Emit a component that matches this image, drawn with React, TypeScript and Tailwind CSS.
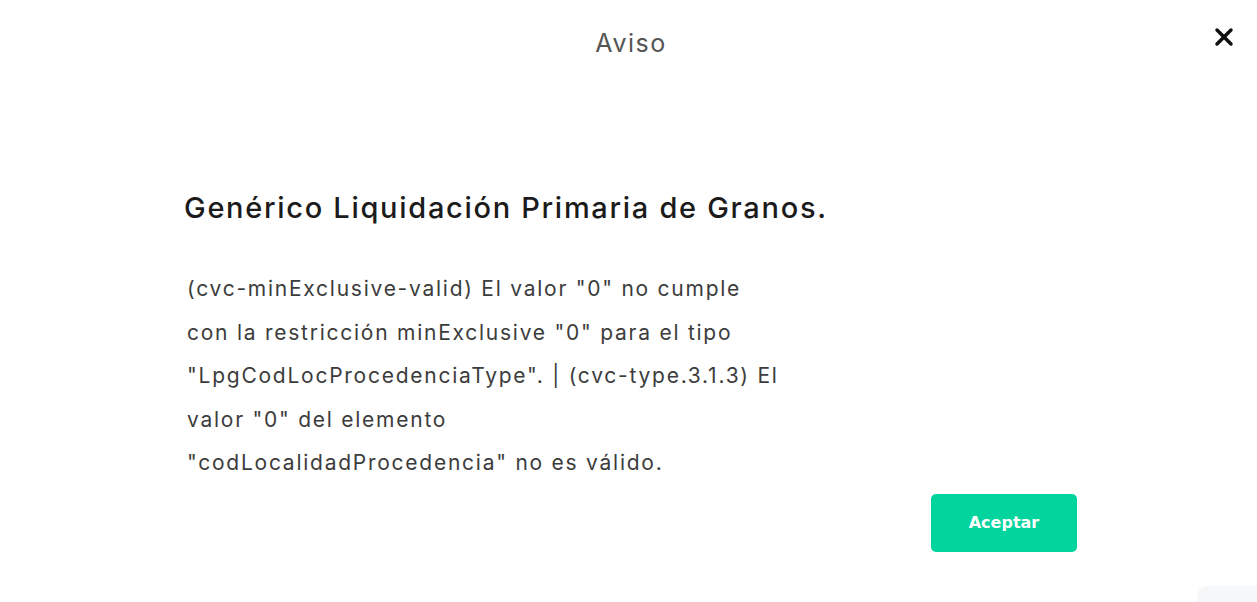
import { X } from "lucide-react"

const lines = [
  '(cvc-minExclusive-valid) El valor "0" no cumple',
  'con la restricción minExclusive "0" para el tipo',
  '"LpgCodLocProcedenciaType". | (cvc-type.3.1.3) El',
  'valor "0" del elemento',
  '"codLocalidadProcedencia" no es válido.',
]

export default function App() {
  return (
    <div className="relative min-h-[602px] bg-white font-['Inter',sans-serif] overflow-hidden">
      <header className="relative flex h-[88px] items-center justify-center pl-[5px]">
        <h1 className="text-[25px] font-normal tracking-[1.5px] text-[#555]">Aviso</h1>
        <button className="absolute right-[15px] top-[19px] p-1 text-[#111]">
          <X className="h-[28px] w-[28px]" strokeWidth={3} />
        </button>
      </header>

      <main className="ml-[184px] w-[893px] pt-[102px]">
        <h2 className="text-[29px] font-medium leading-[36px] tracking-[1.7px] text-[#1b1b1b]">Genérico Liquidación Primaria de Granos.</h2>
        <p className="mt-[41px] pl-[3px] text-[21px] leading-[43.5px] tracking-[1.75px] text-[#3c3c3c]">
          {lines.map((l, i) => (
            <span key={i} className="block">{l}</span>
          ))}
        </p>
        <div className="mt-[9px] flex justify-end">
          <button className="h-[58px] w-[146px] rounded-[5px] bg-[#02d49d] font-['DejaVu_Sans',sans-serif] text-[16px] font-semibold text-white">
            Aceptar
          </button>
        </div>
      </main>

      <div className="absolute bottom-[-20px] right-[-10px] h-[36px] w-[70px] rounded-[10px] bg-[#f6f7f8]" />
    </div>
  )
}
